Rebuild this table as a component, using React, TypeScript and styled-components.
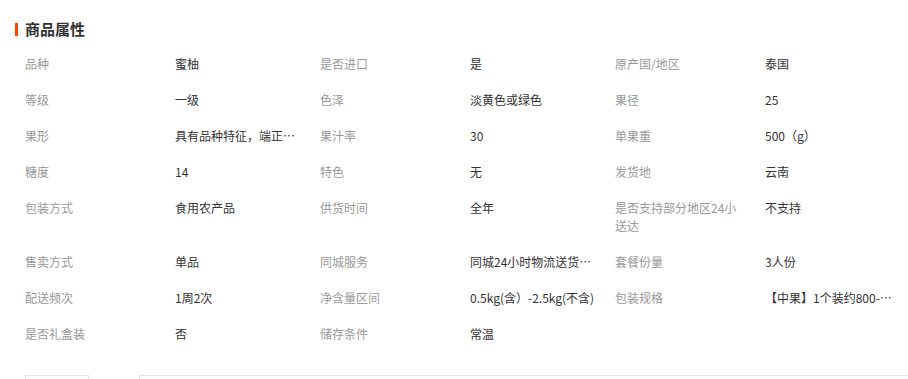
import styled, { createGlobalStyle } from 'styled-components';

const GlobalStyle = createGlobalStyle`
    html, body {
        margin: 0;
        padding: 0;
        background: #fff;
        overflow: hidden;
    }
    body {
        font-family: "Noto Sans CJK SC", "Noto Sans", sans-serif;
        font-size: 12px;
        color: #333;
    }
`;

const Section = styled.div`
    width: 908px;
    height: 379px;
    padding-top: 20px;
    box-sizing: border-box;
`;

const Heading = styled.div`
    display: flex;
    align-items: center;
    gap: 7px;
    padding-left: 15px;
    height: 18px;
`;

const Bar = styled.span`
    width: 3px;
    height: 13px;
    background: #ff4400;
`;

const HeadingText = styled.h3`
    margin: 0;
    font-size: 15px;
    font-weight: bold;
    line-height: 18px;
    color: #333;
`;

const Grid = styled.div`
    display: grid;
    grid-template-columns: 150px 145px 150px 145px 150px 145px;
    padding: 8px 0 0 25px;
`;

const Cell = styled.div<{ $label?: boolean }>`
    padding: 9px 0;
    line-height: 18px;
    min-height: 18px;
    color: ${p => (p.$label ? '#999' : '#333')};
`;

const Text = styled.div<{ $nowrap?: boolean }>`
    width: 130px;
    ${p => p.$nowrap && `
        white-space: nowrap;
        overflow: hidden;
        text-overflow: ellipsis;
    `}
`;

const Footer = styled.div`
    display: flex;
    align-items: flex-start;
    margin-top: 23px;
    padding-left: 25px;
`;

const TabBox = styled.div`
    width: 62px;
    height: 30px;
    border: 1px solid #e5e5e5;
`;

const Marker = styled.span`
    width: 50px;
    padding-top: 1px;
    text-align: center;
    line-height: 12px;
    color: #8ab4e0;
`;

const Line = styled.div`
    flex: 1;
    height: 30px;
    border-top: 1px solid #e5e5e5;
    border-left: 1px solid #e5e5e5;
`;

const attrs: [string, string][] = [
    ['品种', '蜜柚'],
    ['是否进口', '是'],
    ['原产国/地区', '泰国'],
    ['等级', '一级'],
    ['色泽', '淡黄色或绿色'],
    ['果径', '25'],
    ['果形', '具有品种特征，端正饱满，无畸形'],
    ['果汁率', '30'],
    ['单果重', '500（g）'],
    ['糖度', '14'],
    ['特色', '无'],
    ['发货地', '云南'],
    ['包装方式', '食用农产品'],
    ['供货时间', '全年'],
    ['是否支持部分地区24小送达', '不支持'],
    ['售卖方式', '单品'],
    ['同城服务', '同城24小时物流送货上门'],
    ['套餐份量', '3人份'],
    ['配送频次', '1周2次'],
    ['净含量区间', '0.5kg(含）-2.5kg(不含)'],
    ['包装规格', '【中果】1个装约800-1000g'],
    ['是否礼盒装', '否'],
    ['储存条件', '常温'],
];

export default function App() {
    return (
        <Section>
            <GlobalStyle />
            <Heading>
                <Bar />
                <HeadingText>商品属性</HeadingText>
            </Heading>
            <Grid>
                {attrs.map(([label, value], index) => [
                    <Cell $label key={'l' + index}>
                        <Text>{label}</Text>
                    </Cell>,
                    <Cell key={'v' + index}>
                        <Text $nowrap>{value}</Text>
                    </Cell>,
                ])}
            </Grid>
            <Footer>
                <TabBox />
                <Marker>•</Marker>
                <Line />
            </Footer>
        </Section>
    );
}
